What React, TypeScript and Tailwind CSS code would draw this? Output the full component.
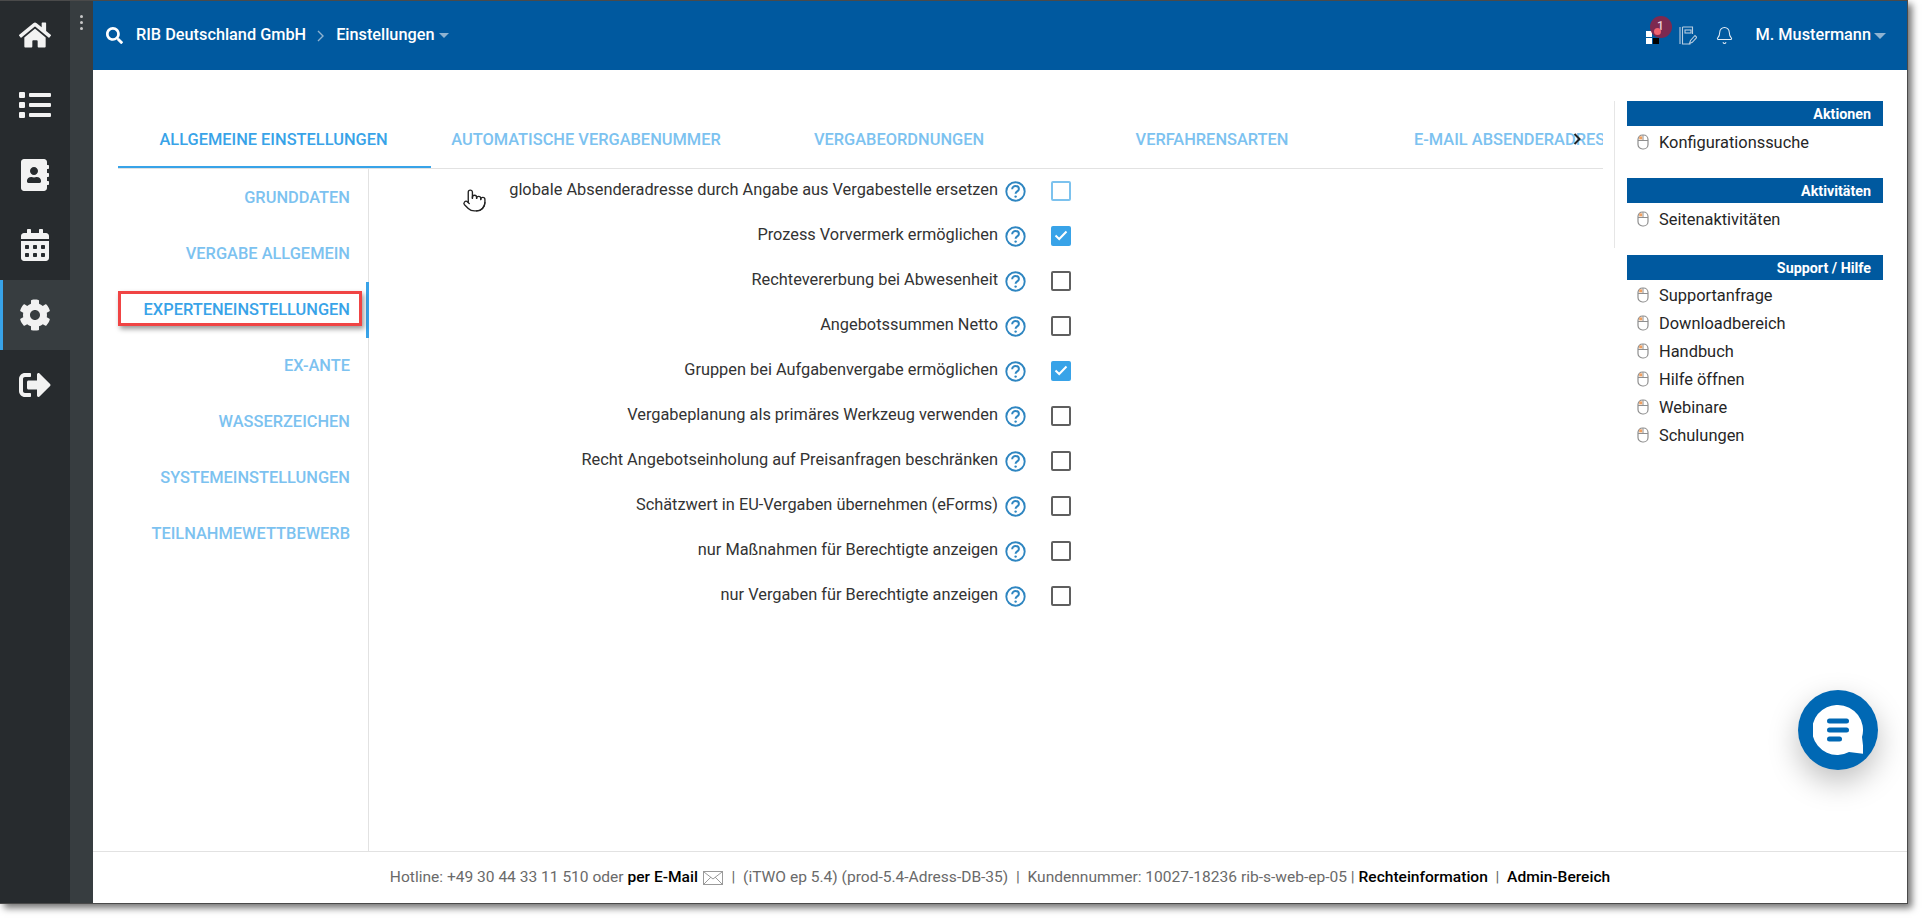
import React from "react";
import { FaHome, FaList, FaAddressBook, FaCalendarAlt, FaCog, FaSignOutAlt, FaSearch } from "react-icons/fa";
import { Bell, Pointer } from "lucide-react";

const tabs = ["ALLGEMEINE EINSTELLUNGEN", "AUTOMATISCHE VERGABENUMMER", "VERGABEORDNUNGEN", "VERFAHRENSARTEN", "E-MAIL ABSENDERADRESSEN"];
const nav = ["GRUNDDATEN", "VERGABE ALLGEMEIN", "EXPERTENEINSTELLUNGEN", "EX-ANTE", "WASSERZEICHEN", "SYSTEMEINSTELLUNGEN", "TEILNAHMEWETTBEWERB"];
const rows: [string, "off" | "on" | "focus"][] = [
  ["globale Absenderadresse durch Angabe aus Vergabestelle ersetzen", "focus"],
  ["Prozess Vorvermerk ermöglichen", "on"],
  ["Rechtevererbung bei Abwesenheit", "off"],
  ["Angebotssummen Netto", "off"],
  ["Gruppen bei Aufgabenvergabe ermöglichen", "on"],
  ["Vergabeplanung als primäres Werkzeug verwenden", "off"],
  ["Recht Angebotseinholung auf Preisanfragen beschränken", "off"],
  ["Schätzwert in EU-Vergaben übernehmen (eForms)", "off"],
  ["nur Maßnahmen für Berechtigte anzeigen", "off"],
  ["nur Vergaben für Berechtigte anzeigen", "off"],
];

function MouseIcon() {
  return (
    <svg width="12" height="16" viewBox="0 0 12 16" className="shrink-0">
      <rect x="1" y="1" width="10" height="14" rx="4.5" fill="#fff" stroke="#8f8f8f" strokeWidth="1.2" />
      <path d="M1 6.5h10M6 1v5.5" stroke="#8f8f8f" strokeWidth="1" />
      <rect x="2.2" y="2.4" width="3" height="3" fill="#f0a060" />
    </svg>
  );
}

function Help() {
  return (
    <svg width="21" height="21" viewBox="0 0 21 21" className="shrink-0 mt-px">
      <circle cx="10.5" cy="10.5" r="9.2" fill="none" stroke="#2f86c1" strokeWidth="1.9" />
      <path d="M7.2 8.2c0-1.9 1.5-3.2 3.4-3.2s3.3 1.2 3.3 2.9c0 2.4-3.3 2.5-3.3 4.8" fill="none" stroke="#2f86c1" strokeWidth="2" />
      <circle cx="10.6" cy="15.6" r="1.2" fill="#2f86c1" />
    </svg>
  );
}

function Check({ state }: { state: "off" | "on" | "focus" }) {
  if (state === "on")
    return (
      <div className="w-5 h-5 rounded-[2px] bg-[#38a3e8] flex items-center justify-center">
        <svg width="14" height="11" viewBox="0 0 14 11"><path d="M1.5 5.5l3.7 3.5 7.3-7.5" fill="none" stroke="#fff" strokeWidth="2" /></svg>
      </div>
    );
  return <div className={state === "focus" ? "w-5 h-5 rounded-[2px] border-2 border-[#7cc2ee]" : "w-5 h-5 rounded-[2px] border-2 border-[#5f5f5f]"} />;
}

function Panel({ title, items, tight }: { title: string; items: string[]; tight?: boolean }) {
  return (
    <div className="mb-[21px] w-[256px]">
      <div className="h-[25px] bg-[#00599f] text-white text-[14.3px] font-bold leading-[26px] text-right pr-[12px]">{title}</div>
      <div className={tight ? "pt-[2px]" : "pt-[3px]"}>
        {items.map((t) => (
          <div key={t} className="h-[28px] flex items-center pl-[10px] gap-[10px] text-[16.4px] text-[#262626]">
            <span className="-mt-[2px]"><MouseIcon /></span>
            <span>{t}</span>
          </div>
        ))}
      </div>
    </div>
  );
}

export default function App() {
  const side = [FaHome, FaList, FaAddressBook, FaCalendarAlt, FaCog, FaSignOutAlt];
  return (
    <div className="w-[1923px] h-[919px] bg-white overflow-hidden font-['Roboto',sans-serif] relative">
      <div className="w-[1908px] h-[904px] border border-[#4a4a4a] flex bg-white shadow-[4px_4px_7px_rgba(0,0,0,0.55)] border-l-0 relative">
        <aside className="w-[93px] shrink-0 flex bg-[#373d40] relative">
          <div className="w-[70px] bg-[#272b2e] h-full" />
          <div className="absolute inset-0 -top-px">
            {side.map((I, i) => (
              <div key={i} className={i === 4 ? "h-[70px] w-[93px] bg-[#373d40] border-l-[3px] border-[#38a3e8] pr-[26px] flex items-center justify-center text-[#f2f2f2]" : "h-[70px] w-[70px] flex items-center justify-center text-[#f2f2f2]"}>
                <I size={32} />
              </div>
            ))}
          </div>
          <div className="absolute left-[80px] top-[14px] flex flex-col gap-[3px]">
            <i className="block w-[3px] h-[3px] rounded-full bg-[#c8c8c8]" />
            <i className="block w-[3px] h-[3px] rounded-full bg-[#c8c8c8]" />
            <i className="block w-[3px] h-[3px] rounded-full bg-[#c8c8c8]" />
          </div>
        </aside>
        <div className="flex-1 flex flex-col min-w-0 relative">
          <header className="h-[69px] bg-[#00599f] text-white flex items-center pl-[13px] pr-[21px] shrink-0">
            <FaSearch size={17} />
            <span className="ml-[13px] text-[16.3px] font-medium">RIB Deutschland GmbH</span>
            <svg width="8" height="12" viewBox="0 0 8 12" className="ml-[11px] mr-[11px]"><path d="M1 1l5 5-5 5" fill="none" stroke="#8fb3d1" strokeWidth="1.4" /></svg>
            <span className="text-[16.3px] font-medium">Einstellungen</span>
            <span className="ml-[4px] border-x-[5px] border-x-transparent border-t-[5px] border-t-[#8fb3d1]" />
            <div className="flex-1" />
            <div className="relative w-[24px] h-[40px] mr-[12px]">
              <div className="absolute left-[3px] top-[15px] w-[13px] h-[13px] grid grid-cols-2 gap-[1px]">
                <i className="block bg-white" /><i className="block bg-transparent" /><i className="block bg-white" /><i className="block bg-black" />
              </div>
              <div className="absolute left-[7px] top-0 w-[22px] h-[22px] rounded-full bg-[#8b2347]/90 text-[12px] text-center leading-[21px] font-medium text-[#e8cfd8]">1</div>
              <i className="absolute left-[11px] top-[12px] w-[7px] h-[7px] rounded-full bg-[#f0626e]" />
            </div>
            <svg width="18" height="19" viewBox="0 0 18 19" className="mr-[18px]" fill="none" stroke="#b7cde0" strokeWidth="1.1">
              <path d="M1 1v17M3.5 1v17h8M3.5 1h10v7" />
              <rect x="6" y="4" width="6" height="3" />
              <path d="M10.5 17.5l1-3 4.5-5 1.8 1.8-4.5 5z" />
            </svg>
            <Bell size={19} strokeWidth={1.3} className="mr-[22px] text-[#e4edf5]" />
            <span className="text-[16.3px] font-medium">M. Mustermann</span>
            <span className="ml-[3px] border-x-[6px] border-x-transparent border-t-[6px] border-t-[#8fb3d1]" />
          </header>
          <div className="flex-1 flex min-h-0">
            <main className="w-[1521px] shrink-0 flex flex-col pl-[25px] pt-[30px]">
              <div className="relative w-[1485px] h-[69px] overflow-hidden flex border-b border-[#e2e2e2] shrink-0">
                {tabs.map((t, i) => (
                  <div key={t} className={i === 0 ? "w-[313px] shrink-0 h-[69px] pt-[15px] pr-[2px] flex items-center justify-center text-[16.4px] font-medium text-[#38a3e8] border-b-[3px] border-[#38a3e8] whitespace-nowrap" : "w-[313px] shrink-0 h-[69px] pt-[15px] pr-[3px] pb-[3px] flex items-center justify-center text-[16.4px] font-medium text-[#7cc2f0] whitespace-nowrap"}>
                    {t}
                  </div>
                ))}
                <svg width="9" height="12" viewBox="0 0 9 12" className="absolute left-[1455px] top-[33px]"><path d="M1.5 1l5 5-5 5" fill="none" stroke="#222" strokeWidth="2" /></svg>
              </div>
              <div className="flex flex-1 min-h-0">
                <nav className="w-[251px] shrink-0 border-r border-[#e2e2e2] pt-px">
                  {nav.map((t, i) => (
                    <div key={t} className={i === 2 ? "h-[56px] flex items-center justify-end pr-[16px] text-[16.4px] font-medium text-[#38a3e8] border-r-[3px] border-[#38a3e8] -mr-px" : "h-[56px] flex items-center justify-end pr-[16px] -mr-px border-r-[3px] border-transparent text-[16.4px] font-medium text-[#7cc2f0]"}>
                      {t}
                    </div>
                  ))}
                </nav>
                <div className="w-[702px] shrink-0 -mt-px">
                  {rows.map(([t, s]) => (
                    <div key={t} className="h-[45px] flex items-center justify-end text-[16.35px] text-[#333]">
                      <span className="mr-[7px]">{t}</span>
                      <Help />
                      <span className="ml-[25px]"><Check state={s} /></span>
                    </div>
                  ))}
                </div>
              </div>
            </main>
            <div className="flex-1 pt-[31px]">
              <div className="border-l border-[#e6e6e6] pl-[12px] h-[147px]">
                <Panel title="Aktionen" items={["Konfigurationssuche"]} />
                <Panel title="Aktivitäten" items={["Seitenaktivitäten"]} />
              </div>
              <div className="ml-[13px] mt-[7px]">
                <Panel tight title="Support / Hilfe" items={["Supportanfrage", "Downloadbereich", "Handbuch", "Hilfe öffnen", "Webinare", "Schulungen"]} />
              </div>
            </div>
          </div>
          <footer className="h-[52px] shrink-0 border-t border-[#e2e2e2] flex items-center justify-center text-[15.55px] text-[#6a6a6a] whitespace-pre">
            <span>Hotline: +49 30 44 33 11 510 oder </span>
            <b className="font-medium text-black">per E-Mail</b>
            <svg width="20" height="14" viewBox="0 0 20 14" className="ml-[5px] mr-[1px]" fill="none" stroke="#9a9a9a"><rect x="0.5" y="0.5" width="19" height="13" /><path d="M1 1l9 7 9-7M1 13l7-7M19 13l-7-7" /></svg>
            <span>  |  (iTWO ep 5.4) (prod-5.4-Adress-DB-35)  |  Kundennummer: 10027-18236 rib-s-web-ep-05 | </span>
            <b className="font-medium text-black">Rechteinformation</b>
            <span>  |  </span>
            <b className="font-medium text-black">Admin-Bereich</b>
          </footer>
          <div className="absolute left-[25px] top-[290px] w-[244px] h-[35px] border-[3px] border-[#f04444] shadow-[2px_3px_5px_rgba(0,0,0,0.4)]" />
          <Pointer size={25} strokeWidth={1.3} className="absolute left-[369px] top-[187px] text-[#222]" />
          <div className="absolute left-[1705px] top-[689px] w-[80px] h-[80px] rounded-full bg-[#0068b4] flex items-center justify-center shadow-[0_12px_30px_rgba(0,0,0,0.25)]">
            <svg width="50" height="50" viewBox="0 0 50 50">
              <path d="M25 0a25 25 0 0 1 24 32l2 17-15-2a25 25 0 1 1-11-47z" fill="#fff" />
              <rect x="14" y="13.5" width="22" height="5" rx="2.5" fill="#0068b4" />
              <rect x="14" y="22.5" width="22" height="5" rx="2.5" fill="#0068b4" />
              <rect x="14" y="31.5" width="15" height="5" rx="2.5" fill="#0068b4" />
            </svg>
          </div>
        </div>
      </div>
    </div>
  );
}
